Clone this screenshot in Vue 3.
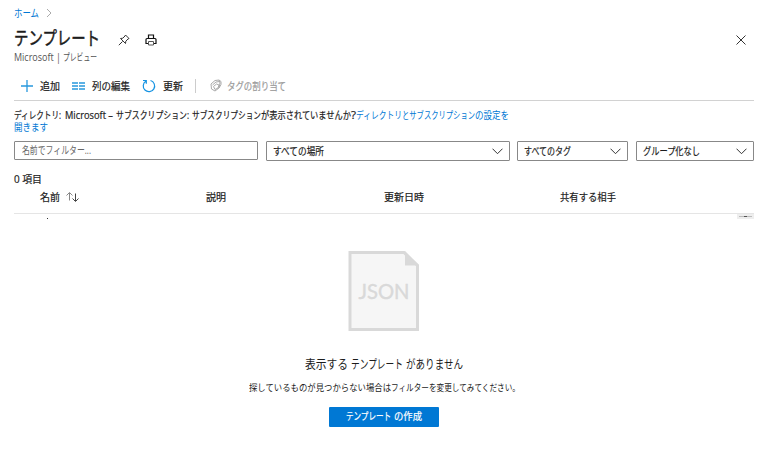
<script setup>
// Condenses a label horizontally so that it occupies the given width.
const vFit = {
  mounted(el, { value }) {
    const natural = el.getBoundingClientRect().width
    el.style.width = value + 'px'
    el.style.transform = `scaleX(${value / natural})`
  }
}

const filters = [
  { label: 'すべての場所', width: 244, text: 51, gap: 7 },
  { label: 'すべてのタグ', width: 111, text: 47, gap: 8 },
  { label: 'グループ化なし', width: 118, text: 57, gap: 0 }
]
const columns = [
  { label: '名前', width: 166, text: 20, sort: true },
  { label: '説明', width: 178, text: 20 },
  { label: '更新日時', width: 176, text: 40 },
  { label: '共有する相手', width: 190, text: 56 }
]
</script>

<template>
  <main class="page">
    <nav class="crumbs">
      <a v-fit="25" class="fit link">ホーム</a>
      <svg class="crumb-arrow" width="6" height="10" viewBox="0 0 6 10"><path d="M1 1l4 4-4 4" /></svg>
    </nav>

    <header class="head">
      <h1><span v-fit="86" class="fit">テンプレート</span></h1>
      <svg class="pin" width="12" height="12" viewBox="0 0 12 12">
        <path d="M7.500 1l3.500 3.500-1 .5-2.200 2.200-.3 2.300-5-5 2.300-.3L7 2z M4.500 7.500L.8 11.200" />
      </svg>
      <svg class="print" width="12" height="12" viewBox="0 0 12 12">
        <path d="M3.500 4.500V1h5v3.500" /><path d="M3 9.500H1V5.500Q1 4.500 2 4.500h8q1 0 1 1v4H9" /><path class="light" d="M3.500 7.500h5v3.500h-5z" />
      </svg>
      <svg class="close" width="10" height="10" viewBox="0 0 10 10"><path d="M.5.5l9 9M9.500.5l-9 9" /></svg>
    </header>
    <p class="sub"><span v-fit="47" class="fit">Microsoft |</span><span v-fit="34" class="fit sub-jp">プレビュー</span></p>

    <div class="toolbar">
      <svg class="add" width="12" height="12" viewBox="0 0 12 12"><path d="M6 0v12M0 6h12" /></svg>
      <span v-fit="20" class="fit">追加</span>
      <svg class="cols" width="13" height="8" viewBox="0 0 13 8"><path d="M0 1h6M7 1h6M0 4h6M7 4h6M0 7h6M7 7h6" /></svg>
      <span v-fit="38" class="fit">列の編集</span>
      <svg class="refresh" width="14" height="14" viewBox="0 0 14 14"><path d="M8.500 1.500A5.700 5.700 0 1 1 4 2.100M1 1.500h3.300v3.300" /></svg>
      <span v-fit="20" class="fit">更新</span>
      <i class="sep"></i>
      <svg class="tag" width="12" height="13" viewBox="0 0 12 13">
        <path d="M1 5l4-3.500 4-.5 1 3-1 5-4 3-3.500-2zM2.500 6L6 3l3.500-.5M3.500 7.500L6.500 5l2.500 1-1 3-3 1.500z M9 1l2 1.500v3L9 9" />
      </svg>
      <span v-fit="59" class="fit muted">タグの割り当て</span>
    </div>

    <div class="info">
      <div class="info-line">
        <span v-fit="47" class="fit i1">ディレクトリ:</span>
        <span v-fit="48" class="fit i2">Microsoft –</span>
        <span v-fit="73" class="fit i3">サブスクリプション:</span>
        <span v-fit="69" class="fit">サブスクリプション</span>
        <span v-fit="90" class="fit">が表示されていませんか</span>
        <span v-fit="5" class="fit">?</span>
        <a v-fit="46" class="fit link">ディレクトリ</a>
        <a v-fit="73" class="fit link">とサブスクリプション</a>
        <a v-fit="34" class="fit link">の設定を</a>
      </div>
      <div class="info-line"><a v-fit="34" class="fit link">開きます</a></div>
    </div>

    <div class="filters">
      <div class="field search"><span v-fit="69" class="fit">名前でフィルター...</span></div>
      <div v-for="f in filters" :key="f.label" class="field select" :style="{ width: f.width + 'px', marginRight: f.gap + 'px' }">
        <span v-fit="f.text" class="fit">{{ f.label }}</span>
        <svg width="11" height="7" viewBox="0 0 11 7"><path d="M.5.7l5 5 5-5" /></svg>
      </div>
    </div>

    <p class="count"><span v-fit="28" class="fit">0 項目</span></p>

    <div class="thead">
      <div v-for="c in columns" :key="c.label" :style="{ width: c.width + 'px' }">
        <span v-fit="c.text" class="fit">{{ c.label }}</span>
        <svg v-if="c.sort" class="sort" width="13" height="10" viewBox="0 0 13 10">
          <path class="up" d="M3.500 8.500V.8M.5 3.500l3-3 3 3" /><path d="M9.500 1.500V9M6.500 6.500l3 3 3-3" />
        </svg>
      </div>
    </div>
    <div class="clip"><i class="speck"></i><span class="thumb"><i></i></span></div>

    <section class="empty">
      <svg width="72" height="80" viewBox="0 0 72 80">
        <path class="sheet" d="M2 1.500H56L69.500 14.500V78.500H2z" /><path class="fold" d="M57 0v14.500h14z" />
        <text x="10.500" y="48" textLength="51" lengthAdjust="spacingAndGlyphs">JSON</text>
      </svg>
      <h2>
        <span v-fit="43" class="fit">表示する</span>
        <span v-fit="52" class="fit">テンプレート</span>
        <span v-fit="57" class="fit">がありません</span>
      </h2>
      <p>
        <span v-fit="142" class="fit">探しているものが見つからない場合は</span>
        <span v-fit="129" class="fit">フィルターを変更してみてください。</span>
      </p>
      <button>
        <span v-fit="45" class="fit">テンプレート</span>
        <span v-fit="28" class="fit">の作成</span>
      </button>
    </section>
  </main>
</template>

<style>
body { background: #fff; }
</style>

<style scoped>
* { box-sizing: border-box; }
.page {
  width: 768px; height: 450px; padding: 6px 14px 0; overflow: hidden;
  font-family: "Open Sans", "Noto Sans CJK JP", sans-serif;
  font-size: 10.500px; line-height: 14px; color: #1c1c1c;
  -webkit-text-stroke: .2px currentColor;
}
h1, h2, p { margin: 0; font-weight: 400; }
svg { display: block; flex: none; fill: none; stroke: #333; }
.fit { display: inline-block; flex: none; white-space: nowrap; transform-origin: 0 50%; }
.link { color: #0078d4; -webkit-text-stroke: 0; }
.crumbs { display: flex; align-items: center; height: 14px; }
.crumb-arrow { margin-left: 7px; stroke: #aaa; }
.head { display: flex; align-items: center; height: 31px; padding-top: 5px; }
h1 { font-size: 18.500px; line-height: 24px; width: 86px; height: 24px; -webkit-text-stroke: .5px #222; }
.head svg { margin-bottom: -4px; }
.head .pin { margin-left: 18px; }
.head .print { margin-left: 15px; stroke: #111; stroke-width: 1.200; }
.print .light { stroke: #555; stroke-width: 1; }
.head .close { margin-left: auto; margin-right: 8px; }
.sub { display: flex; height: 13px; line-height: 12px; font-size: 10px; color: #555; -webkit-text-stroke: 0; }
.sub-jp { margin-left: 2px; }
.toolbar { display: flex; align-items: center; height: 37px; padding: 7px 0 0 7px; border-bottom: 1px solid #d2d2d2; }
.add { stroke: #2798dd; stroke-width: 1.300; margin-right: 7px; }
.cols { stroke: #2798dd; stroke-width: 1.300; margin: 0 7px 0 12px; }
.refresh { stroke: #1593e2; stroke-width: 1.200; margin: 0 7px 0 12px; }
.sep { width: 1px; height: 14px; background: #ccc; margin: 0 14px 0 12px; }
.tag { stroke: #aaa; margin-right: 5px; }
.muted { color: #999; }
.info { padding-top: 8px; height: 40px; font-size: 10px; }
.info-line { display: flex; height: 12px; line-height: 12px; }
.i1 { margin-right: 4px; }
.i2 { margin-right: 3px; }
.i3 { margin-right: 3px; }
.filters { display: flex; align-items: flex-start; height: 30px; }
.field { flex: none; height: 20px; border: 1px solid #888; padding: 0 7px; display: flex; align-items: center; border-radius: 1px; }
.search { width: 244px; height: 19px; margin-right: 8px; padding-bottom: 1px; color: #666; -webkit-text-stroke: 0; }
.select { justify-content: space-between; padding: 0 6px; }
.count { height: 14px; margin-top: 1px; }
.thead { display: flex; align-items: center; height: 28px; padding: 0 0 5px 26px; border-bottom: 1px solid #e5e5e5; }
.thead > div { display: flex; align-items: center; }
.sort { margin-left: 6px; stroke: #444; }
.sort .up { stroke: #888; }
.clip { display: flex; justify-content: space-between; height: 5px; width: 740px; padding-left: 33px; }
.speck { width: 1px; height: 1px; margin-top: 4px; background: #333; }
.thumb { width: 17px; height: 5px; background: #eee; padding: 2px; }
.thumb i { display: block; height: 1px; background: linear-gradient(90deg, #bbb 5px, #555 5px, #555 8px, #bbb 8px); }
.empty { display: flex; flex-direction: column; align-items: center; padding-top: 32px; }
.sheet { fill: #f6f6f6; stroke: #d9d9d9; stroke-width: 3; }
.fold { fill: #d9d9d9; stroke: none; }
.empty text { fill: #d9d9d9; stroke: #d9d9d9; stroke-width: .4px; -webkit-text-stroke: .4px #d9d9d9; font: 400 20.500px Lato, sans-serif; }
h2 { display: flex; gap: 3px; font-size: 12.500px; line-height: 16px; margin-top: 26px; -webkit-text-stroke: 0; }
.empty p { display: flex; font-size: 9.500px; height: 14px; margin-top: 8px; -webkit-text-stroke: 0; }
button {
  width: 110px; height: 20px; margin-top: 12px; padding: 0 0 2px; border: 0; border-radius: 1px;
  background: #0078d4; color: #fff; font: inherit; display: flex; align-items: center; justify-content: center; gap: 3px;
}
</style>
